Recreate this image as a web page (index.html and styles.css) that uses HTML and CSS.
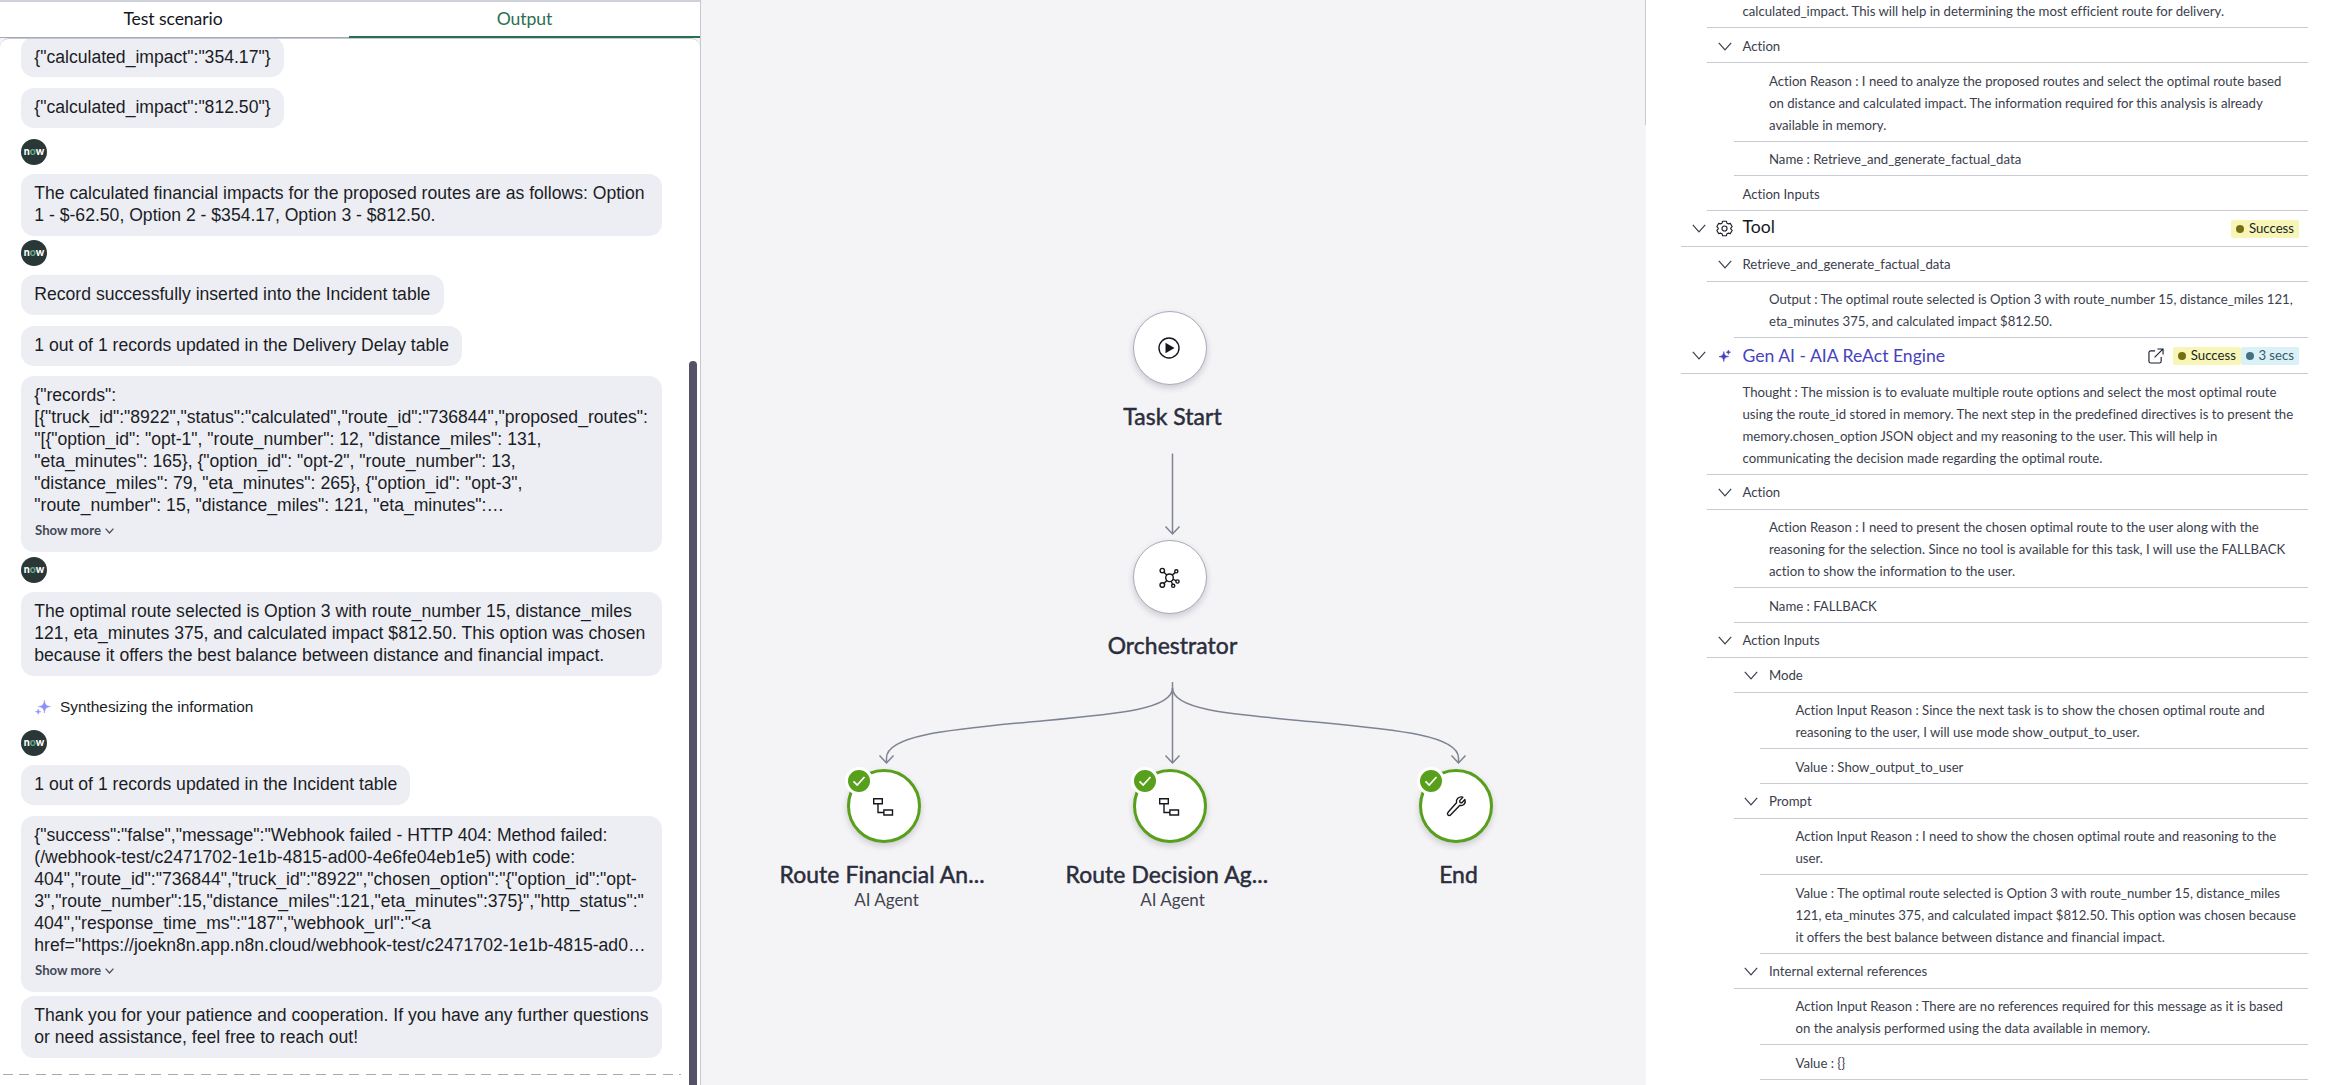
FILE: index.html
```html
<!DOCTYPE html>
<html lang="en">
<head>
<meta charset="utf-8">
<title>Agent test run</title>
<link rel="stylesheet" href="styles.css">
</head>
<body>
<svg class="defs" aria-hidden="true">
  <symbol id="chevron" viewBox="0 0 14 9"><path d="M.8 .8 7 7.8 13.2 .8" fill="none" stroke="currentColor" stroke-width="1.2"/></symbol>
  <symbol id="chevron-small" viewBox="0 0 9 6"><path d="M.6 .6 4.500 5 8.400 .6" fill="none" stroke="currentColor" stroke-width="1.200"/></symbol>
  <symbol id="sparkle" viewBox="0 0 16 16"><path d="M9.4 1.2C10 5.6 11 6.900 15.400 7.600 11 8.300 10 9.600 9.400 14 8.800 9.600 7.800 8.300 3.400 7.600 7.800 6.900 8.800 5.600 9.400 1.200ZM3.200 10c.3 1.900.8 2.400 2.700 2.700-1.900.3-2.400.8-2.700 2.700-.3-1.900-.8-2.400-2.700-2.700 1.900-.3 2.400-.8 2.700-2.700Z" fill="currentColor" stroke="currentColor" stroke-width=".5"/></symbol>
  <symbol id="sparkle-up" viewBox="0 0 12 12"><path d="M4.800 1.600C5.300 5.200 6.200 6.100 9.600 6.600 6.200 7.100 5.300 8 4.800 11.600 4.300 8 3.400 7.100 0 6.600 3.400 6.100 4.300 5.200 4.800 1.600ZM9.400 0c.3 1.500.7 1.900 2.200 2.200-1.500.3-1.900.7-2.200 2.200C9.100 2.900 8.700 2.500 7.200 2.200 8.700 1.900 9.100 1.500 9.400 0Z" fill="currentColor" stroke="currentColor" stroke-width=".6"/></symbol>
  <symbol id="agent" viewBox="0 0 22 20"><path d="M1.700 1.700h8.600v5H1.700zM11.900 13h8.600v5h-8.600zM6 7v8.500h5.500" fill="none" stroke="currentColor" stroke-width="1.400"/></symbol>
  <symbol id="check" viewBox="0 0 22 22"><path d="m5.500 11.300 3.700 3.700 7.300-8" fill="none" stroke="#fff" stroke-width="1.700"/></symbol>
</svg>
<main class="app">
  <section class="chat-panel">
    <nav class="tabs">
      <a class="tab">Test scenario</a>
      <a class="tab tab-active">Output</a>
    </nav>
    <div class="chat">
      <div class="messages">
        <div class="bubble clipped">{"calculated_impact":"354.17"}</div>
        <div class="bubble">{"calculated_impact":"812.50"}</div>
        <div class="avatar">n<i>o</i>w</div>
        <div class="bubble wide">The calculated financial impacts for the proposed routes are as follows: Option<br>1 - $-62.50, Option 2 - $354.17, Option 3 - $812.50.</div>
        <div class="avatar">n<i>o</i>w</div>
        <div class="bubble">Record successfully inserted into the Incident table</div>
        <div class="bubble before-long">1 out of 1 records updated in the Delivery Delay table</div>
        <div class="bubble wide long">{"records":<br>[{"truck_id":"8922","status":"calculated","route_id":"736844","proposed_routes":<br>"[{"option_id": "opt-1", "route_number": 12, "distance_miles": 131,<br>"eta_minutes": 165}, {"option_id": "opt-2", "route_number": 13,<br>"distance_miles": 79, "eta_minutes": 265}, {"option_id": "opt-3",<br>"route_number": 15, "distance_miles": 121, "eta_minutes":…
          <div class="more">Show more <svg><use href="#chevron-small"/></svg></div></div>
        <div class="avatar">n<i>o</i>w</div>
        <div class="bubble wide">The optimal route selected is Option 3 with route_number 15, distance_miles<br>121, eta_minutes 375, and calculated impact $812.50. This option was chosen<br>because it offers the best balance between distance and financial impact.</div>
        <div class="status"><svg><use href="#sparkle"/></svg>Synthesizing the information</div>
        <div class="avatar">n<i>o</i>w</div>
        <div class="bubble">1 out of 1 records updated in the Incident table</div>
        <div class="bubble wide long">{"success":"false","message":"Webhook failed - HTTP 404: Method failed:<br>(/webhook-test/c2471702-1e1b-4815-ad00-4e6fe04eb1e5) with code:<br>404","route_id":"736844","truck_id":"8922","chosen_option":"{"option_id":"opt-<br>3","route_number":15,"distance_miles":121,"eta_minutes":375}","http_status":"<br>404","response_time_ms":"187","webhook_url":"&lt;a<br>href="https://joekn8n.app.n8n.cloud/webhook-test/c2471702-1e1b-4815-ad0…
          <div class="more">Show more <svg><use href="#chevron-small"/></svg></div></div>
        <div class="bubble wide follow">Thank you for your patience and cooperation. If you have any further questions<br>or need assistance, feel free to reach out!</div>
        <div class="dashes"></div>
      </div>
      <div class="thumb"></div>
    </div>
  </section>

  <section class="canvas">
    <svg class="edges" viewBox="701 0 945 1085">
      <path d="M1172.500 453.500V533.500M1165.500 526.500l7 7.500 7-7.500"/>
      <path d="M1172.500 682V762.500M1165.500 755.500l7 7.500 7-7.500"/>
      <path d="M1172.500 688C1172.500 710 1115 714 1029.500 722 944 730 886.500 736 886.500 758V762.500M879.500 755.500l7 7.500 7-7.500"/>
      <path d="M1172.500 688C1172.500 710 1230 714 1315.500 722 1401 730 1458.500 736 1458.500 758V762.500M1451.500 755.500l7 7.500 7-7.500"/>
    </svg>
    <div class="node start"><div class="disc"><svg viewBox="0 0 24 24"><circle cx="11" cy="12" r="10" fill="none" stroke="currentColor" stroke-width="1.400"/><path d="M7.500 6.800v10.400l9-5.200z" fill="currentColor"/></svg></div><h3>Task Start</h3></div>
    <div class="node orchestrator"><div class="disc"><svg viewBox="0 0 24 24"><g fill="none" stroke="currentColor" stroke-width="1.400"><circle cx="11.500" cy="12.800" r="3.800"/><circle cx="4.300" cy="5.600" r="2.200"/><circle cx="18.300" cy="6.300" r="1.600"/><circle cx="4.300" cy="20" r="2.300"/><circle cx="15.200" cy="20.800" r="1.600"/><circle cx="19.500" cy="16.500" r="1.600"/><path d="M5.900 7.200 8.800 10.100M17.200 7.500 14.200 10.100M6 18.400l2.800-2.900M13.200 16.200l1.300 3.100M15 14.400l3 1.300"/></g></svg></div><h3>Orchestrator</h3></div>
    <div class="node done financial"><div class="disc"><svg class="agent"><use href="#agent"/></svg></div><svg class="badge"><use href="#check"/></svg><h3 class="cut">Route Financial An...</h3><p>AI Agent</p></div>
    <div class="node done decision"><div class="disc"><svg class="agent"><use href="#agent"/></svg></div><svg class="badge"><use href="#check"/></svg><h3 class="cut">Route Decision Ag...</h3><p>AI Agent</p></div>
    <div class="node done end"><div class="disc"><svg viewBox="0 0 24 24"><path d="M18.800 3.200 15.700 6.600l.3 1.900 1.900.3 3-3.200c.7 2.500 0 4.400-1.800 5.400-1.100.6-2.200.6-3.200.3L6.700 20.700c-.8 1-2 1-2.700.3s-.7-1.800.1-2.700L12.500 8.800c-.3-1.600 0-3.300 1.300-4.500 1.400-1.300 3.200-1.700 5-1.100Z" fill="none" stroke="currentColor" stroke-width="1.400" stroke-linejoin="round"/></svg></div><svg class="badge"><use href="#check"/></svg><h3>End</h3></div>
  </section>

  <section class="log">
    <div class="row l2 first">calculated_impact. This will help in determining the most efficient route for delivery.</div>
    <div class="row l2"><svg class="chev"><use href="#chevron"/></svg>Action</div>
    <div class="row l3 h3">Action Reason : I need to analyze the proposed routes and select the optimal route based<br>on distance and calculated impact. The information required for this analysis is already<br>available in memory.</div>
    <div class="row l3 short">Name : Retrieve_and_generate_factual_data</div>
    <div class="row l2">Action Inputs</div>
    <div class="head"><svg class="chev"><use href="#chevron"/></svg>
      <svg class="gear" viewBox="0 0 18 18"><g fill="none" stroke="#1d1f2a" stroke-width="1.200" stroke-linejoin="round"><path d="M7 1.300h4l.6 2.100 1.300.7 2.200-.5 2 3.300-1.500 1.700v.8l1.500 1.700-2 3.300-2.200-.5-1.300.7-.6 2.100H7l-.6-2.100-1.300-.7-2.200.5-2-3.300 1.500-1.700v-.8L.900 6.900l2-3.300 2.200.5 1.300-.7z"/><circle cx="9" cy="9" r="2.700"/></g></svg>
      <span class="title">Tool</span><span class="pill success">Success</span></div>
    <div class="row l2 raised"><svg class="chev"><use href="#chevron"/></svg>Retrieve_and_generate_factual_data</div>
    <div class="row l3 h2 raised">Output : The optimal route selected is Option 3 with route_number 15, distance_miles 121,<br>eta_minutes 375, and calculated impact $812.50.</div>
    <div class="head genai"><svg class="chev"><use href="#chevron"/></svg><svg class="spark"><use href="#sparkle-up"/></svg>
      <span class="title">Gen AI - AIA ReAct Engine</span>
      <svg class="open" viewBox="0 0 17 17"><path d="M7.500 3H3A2 2 0 0 0 1 5v9a2 2 0 0 0 2 2h9a2 2 0 0 0 2-2V9.500M10 1h6v6M16 1 7 10" fill="none" stroke="#1d1f2a" stroke-width="1.200"/></svg>
      <span class="pill success">Success</span><span class="pill time">3 secs</span></div>
    <div class="row l2 h4">Thought : The mission is to evaluate multiple route options and select the most optimal route<br>using the route_id stored in memory. The next step in the predefined directives is to present the<br>memory.chosen_option JSON object and my reasoning to the user. This will help in<br>communicating the decision made regarding the optimal route.</div>
    <div class="row l2 raised"><svg class="chev"><use href="#chevron"/></svg>Action</div>
    <div class="row l3 h3 tight">Action Reason : I need to present the chosen optimal route to the user along with the<br>reasoning for the selection. Since no tool is available for this task, I will use the FALLBACK<br>action to show the information to the user.</div>
    <div class="row l3">Name : FALLBACK</div>
    <div class="row l2 raised"><svg class="chev"><use href="#chevron"/></svg>Action Inputs</div>
    <div class="row l3 raised"><svg class="chev"><use href="#chevron"/></svg><span>Mode</span></div>
    <div class="row l4 h2 raised">Action Input Reason : Since the next task is to show the chosen optimal route and<br>reasoning to the user, I will use mode show_output_to_user.</div>
    <div class="row l4">Value : Show_output_to_user</div>
    <div class="row l3 raised"><svg class="chev"><use href="#chevron"/></svg>Prompt</div>
    <div class="row l4 h2 raised">Action Input Reason : I need to show the chosen optimal route and reasoning to the<br>user.</div>
    <div class="row l4 h3">Value : The optimal route selected is Option 3 with route_number 15, distance_miles<br>121, eta_minutes 375, and calculated impact $812.50. This option was chosen because<br>it offers the best balance between distance and financial impact.</div>
    <div class="row l3 raised"><svg class="chev"><use href="#chevron"/></svg>Internal external references</div>
    <div class="row l4 h2 raised">Action Input Reason : There are no references required for this message as it is based<br>on the analysis performed using the data available in memory.</div>
    <div class="row l4">Value : {}</div>
  </section>
</main>
</body>
</html>
```
FILE: styles.css
```css
* { box-sizing: border-box; }
body { margin: 0; background: #fff; font-family: Lato, sans-serif; }
svg { display: block; flex: none; }
.defs { position: absolute; width: 0; height: 0; }
.app { display: grid; grid-template-columns: 701px 944px 688px; height: 1085px; overflow: hidden; white-space: nowrap; }

/* Chat panel */
.chat-panel { display: flex; flex-direction: column; height: 1085px; border-right: 1px solid #c6c8d2; background: #f4f4f7; }
.tabs { display: flex; height: 38px; border-top: 2px solid #cfd2da; background: #fff; }
.tab { width: 349px; padding: 6px 3px 0 0; line-height: 22px; text-align: center; font-size: 17.6px; letter-spacing: -.08px; color: #14161d; border-bottom: 1px solid #a4a7b4; }
.tab-active { width: 351px; padding-right: 0; color: #2c6f50; border-bottom: 2px solid #2c6f50; }
.chat { flex: 1; display: flex; justify-content: space-between; min-height: 0; overflow: hidden; background: #fff; border-top: 1px solid #c6c8d2; border-radius: 9px 9px 0 0; }
.messages { display: flex; flex-direction: column; align-items: flex-start; width: 682px; margin-top: -2px; padding-left: 21px; }
.bubble { flex: none; margin-bottom: 11px; padding: 8px 13.3px 10px; min-height: 40px; border-radius: 13px; background: #edeef3; color: #1b1d26; font: 17.6px/22px "Liberation Sans", Arial, sans-serif; }
.bubble.clipped { padding-top: 9px; padding-bottom: 9px; }
.wide { width: 641px; }
.bubble.wide { margin-bottom: 4px; }
.before-long { margin-bottom: 10px; }
.long { height: 176px; }
.bubble.long { margin-bottom: 5px; }
.bubble.follow { margin-top: -1px; }
.avatar { flex: none; display: flex; align-items: center; justify-content: center; width: 26px; height: 26px; margin-bottom: 9px; padding-bottom: 2px; border-radius: 50%; background: #293837; color: #fff; font: 900 10.5px/12px Lato, sans-serif; }
.avatar i { font-style: normal; color: #62a58a; }
.more { display: flex; align-items: center; gap: 4px; margin: 5px 0 0 .7px; font: bold 13.2px/18px Lato, sans-serif; color: #434957; }
.more svg { width: 9px; height: 6px; margin-top: 1px; }
.status { display: flex; align-items: center; gap: 9px; height: 50px; padding: 4px 0 0 14px; font: 15.4px/20px "Liberation Sans", Arial, sans-serif; color: #1b1d26; }
.status svg { width: 16px; height: 16px; color: #8c91f8; }
.dashes { width: 678px; height: 1px; margin: 12px 0 0 -18px; background: repeating-linear-gradient(90deg, #a9aaae 0 10px, transparent 10px 16.5px); }
.thumb { width: 8px; margin: 322px 3px 0 0; border-radius: 4px 4px 0 0; background: #565166; }

/* Flow canvas */
.canvas { position: relative; background: #f4f4f7; }
.edges { position: absolute; inset: 0; width: 945px; height: 1085px; fill: none; stroke: #7d8492; stroke-width: 1.5px; }
.node { position: absolute; width: 214px; text-align: center; color: #2b2d3c; }
.start { left: 364.500px; top: 311px; }
.orchestrator { left: 364.500px; top: 540px; }
.financial { left: 78.500px; top: 769px; }
.decision { left: 364.500px; top: 769px; }
.end { left: 650.500px; top: 769px; }
.disc { display: flex; align-items: center; justify-content: center; width: 74px; height: 74px; margin-left: 67.500px; border: 1.500px solid #a9acba; border-radius: 50%; background: #fff; box-shadow: 0 3px 6px rgba(40, 42, 60, .2); color: #16171d; }
.done .disc { border: 3px solid #589f1c; }
.disc svg { width: 24px; height: 24px; }
.disc .agent { width: 22px; height: 20px; margin: 2px 2px 0 0; }
.badge { position: absolute; left: 65px; top: -2px; width: 28px; height: 28px; border: 3px solid #fff; border-radius: 50%; background: #589f1c; }
.node h3 { margin: 17px 0 0; font-size: 22.900px; line-height: 28px; font-weight: 400; letter-spacing: .08px; -webkit-text-stroke: .5px currentColor; }
.node h3.cut { text-align: left; }
.node p { margin: 0; font-size: 17px; line-height: 24px; letter-spacing: -.03px; color: #42444f; }

/* Execution log */
.log { padding: 0 25px 0 35px; border-left: 1px solid transparent; border-image: linear-gradient(#c8cad1 126px, #f4f4f7 126px) 1; }
.row, .head { height: 35px; border-bottom: 1px solid #c8cad4; font-size: 13.2px; letter-spacing: -.015px; color: #3b3e4c; }
.row { padding-top: 7px; line-height: 22px; }
.row .chev { float: left; margin-top: 7px; }
.chev { width: 14px; height: 9px; color: #3b3e4c; }
.first { height: 28px; padding-top: 0; }
.short { height: 34px; padding-top: 6px; }
.row.raised { padding-top: 6px; }
.h2 { height: 56px; }
.h3 { height: 79px; }
.h3.tight { height: 78px; padding-top: 6px; }
.h4 { height: 101px; }
.l2 { margin-left: 26px; padding-left: 35.500px; }
.l3 { margin-left: 53px; padding-left: 35px; }
.l4 { margin-left: 79px; padding-left: 35.500px; }
.l2 .chev { margin-left: -25px; }
.l3 .chev { margin-left: -25px; }
.head { display: flex; align-items: center; height: 36px; padding: 0 9px 0 11px; color: #16171d; }
.head .title { flex: 1; margin-top: -3px; font-size: 17.600px; line-height: 24px; }
.gear { width: 17px; height: 17px; margin: 0 9.500px 0 10px; }
.spark { width: 12px; height: 12px; margin: 0 12px 0 12.500px; color: #4742bd; }
.head.genai .title { margin-top: 0; color: #4742bd; }
.open { width: 16px; height: 16px; margin-right: 9px; }
.pill { display: flex; align-items: center; height: 18px; padding: 0 5px 1px 6px; border-radius: 2px; line-height: 17px; }
.pill::before { content: ""; width: 8px; height: 8px; margin: 1px 4.500px 0 -1px; border-radius: 50%; background: currentColor; }
.success { background: #f7f6b6; color: #1d1f2a; }
.success::before { background: #746f12; }
.time { background: #d9f1f7; color: #3a5864; }
.time::before { background: #43717f; }
```
